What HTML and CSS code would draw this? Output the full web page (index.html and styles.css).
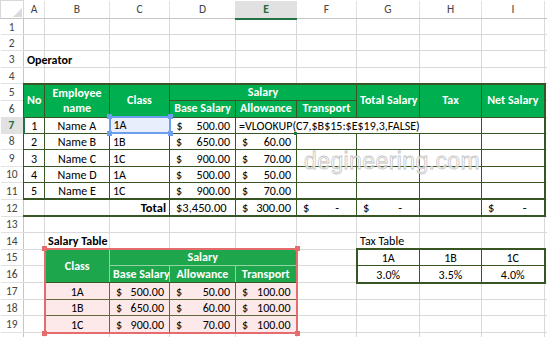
FILE: index.html
```html
<!DOCTYPE html>
<html>
<head>
<meta charset="utf-8">
<link rel="stylesheet" href="styles.css">
</head>
<body>
<table class="sheet">
<colgroup>
<col class="w-rh"><col class="w-a"><col class="w-b"><col class="w-c"><col class="w-d"><col class="w-e"><col class="w-f"><col class="w-g"><col class="w-h"><col class="w-i"><col class="w-x">
</colgroup>
<tr class="hdr">
<td class="corner"><svg width="9" height="9" viewBox="0 0 9 9"><polygon points="9,0 9,9 0,9" fill="#dadada"/></svg></td>
<td class="ch">A</td><td class="ch">B</td><td class="ch">C</td><td class="ch">D</td><td class="ch sel">E</td><td class="ch">F</td><td class="ch">G</td><td class="ch">H</td><td class="ch">I</td><td class="ch"></td>
</tr>
<tr class="r16"><td class="rh">1</td><td></td><td></td><td></td><td></td><td></td><td></td><td></td><td></td><td></td><td></td></tr>
<tr class="r16"><td class="rh">2</td><td></td><td></td><td></td><td></td><td></td><td></td><td></td><td></td><td></td><td></td></tr>
<tr class="r17"><td class="rh">3</td><td class="b">Operator</td><td></td><td></td><td></td><td></td><td></td><td></td><td></td><td></td><td></td></tr>
<tr class="r16"><td class="rh">4</td><td></td><td></td><td></td><td></td><td></td><td></td><td></td><td></td><td></td><td></td></tr>
<tr class="r16">
<td class="rh">5</td>
<td class="th top" rowspan="2">No</td>
<td class="th top" rowspan="2">Employee<br>name</td>
<td class="th top" rowspan="2">Class</td>
<td class="th top" colspan="3">Salary</td>
<td class="th top" rowspan="2">Total Salary</td>
<td class="th top" rowspan="2">Tax</td>
<td class="th top right" rowspan="2">Net Salary</td>
<td></td>
</tr>
<tr class="r17">
<td class="rh">6</td>
<td class="th">Base Salary</td><td class="th">Allowance</td><td class="th">Transport</td>
<td></td>
</tr>
<tr class="r16">
<td class="rh cur">7</td>
<td class="t c">1</td><td class="t c">Name A</td>
<td class="t ref">1A<span class="hd h-tl"></span><span class="hd h-tr"></span><span class="hd h-bl"></span><span class="hd h-br"></span></td>
<td class="t acct"><span class="cur-s">$</span>500.00</td>
<td class="t act ov">=VLOOKUP(C7,$B$15:$E$19,3,FALSE)<span class="fill"></span></td>
<td class="t ov"></td><td class="t ov"></td><td class="t"></td><td class="t right"></td>
<td></td>
</tr>
<tr class="r16">
<td class="rh">8</td>
<td class="t c">2</td><td class="t c">Name B</td><td class="t">1B</td>
<td class="t acct"><span class="cur-s">$</span>650.00</td>
<td class="t acct"><span class="cur-s">$</span>60.00</td>
<td class="t"></td><td class="t"></td><td class="t"></td><td class="t right"></td>
<td></td>
</tr>
<tr class="r17">
<td class="rh">9</td>
<td class="t c">3</td><td class="t c">Name C</td><td class="t">1C</td>
<td class="t acct"><span class="cur-s">$</span>900.00</td>
<td class="t acct"><span class="cur-s">$</span>70.00</td>
<td class="t"></td><td class="t"></td><td class="t"></td><td class="t right"></td>
<td></td>
</tr>
<tr class="r16">
<td class="rh">10</td>
<td class="t c">4</td><td class="t c">Name D</td><td class="t">1A</td>
<td class="t acct"><span class="cur-s">$</span>500.00</td>
<td class="t acct"><span class="cur-s">$</span>50.00</td>
<td class="t"></td><td class="t"></td><td class="t"></td><td class="t right"></td>
<td></td>
</tr>
<tr class="r17">
<td class="rh">11</td>
<td class="t c">5</td><td class="t c">Name E</td><td class="t">1C</td>
<td class="t acct"><span class="cur-s">$</span>900.00</td>
<td class="t acct"><span class="cur-s">$</span>70.00</td>
<td class="t"></td><td class="t"></td><td class="t"></td><td class="t right"></td>
<td></td>
</tr>
<tr class="r17">
<td class="rh">12</td>
<td class="tot g-r"></td><td class="tot g-r"></td>
<td class="tot g-l b r">Total</td>
<td class="tot acct big">$3,450.00</td>
<td class="tot acct"><span class="cur-s">$</span>300.00</td>
<td class="tot acct dash"><span class="cur-s">$</span>-</td>
<td class="tot acct dash"><span class="cur-s">$</span>-</td>
<td class="tot"></td>
<td class="tot acct dash right"><span class="cur-s">$</span>-</td>
<td></td>
</tr>
<tr class="r16"><td class="rh">13</td><td></td><td></td><td></td><td></td><td></td><td></td><td></td><td></td><td></td><td></td></tr>
<tr class="r17"><td class="rh">14</td><td></td><td class="b">Salary Table</td><td></td><td></td><td></td><td></td><td>Tax Table</td><td></td><td></td><td></td></tr>
<tr class="r16">
<td class="rh">15</td><td></td>
<td class="sh rl rt" rowspan="2">Class<span class="rd h-tl"></span></td>
<td class="sh rt rr" colspan="3">Salary<span class="rd h-tr"></span></td>
<td></td>
<td class="x c xl xt">1A</td><td class="x c xt">1B</td><td class="x c xt xr">1C</td>
<td></td>
</tr>
<tr class="r17">
<td class="rh">16</td><td></td>
<td class="sh sb">Base Salary</td><td class="sh sb">Allowance</td><td class="sh sb rr">Transport</td>
<td></td>
<td class="x c xl xb">3.0%</td><td class="x c xb">3.5%</td><td class="x c xb xr">4.0%</td>
<td></td>
</tr>
<tr class="r17">
<td class="rh">17</td><td></td>
<td class="s c rl">1A</td>
<td class="s acct"><span class="cur-s">$</span>500.00</td>
<td class="s acct"><span class="cur-s">$</span>50.00</td>
<td class="s acct rr"><span class="cur-s">$</span>100.00</td>
<td></td><td></td><td></td><td></td><td></td>
</tr>
<tr class="r16">
<td class="rh">18</td><td></td>
<td class="s c rl">1B</td>
<td class="s acct"><span class="cur-s">$</span>650.00</td>
<td class="s acct"><span class="cur-s">$</span>60.00</td>
<td class="s acct rr"><span class="cur-s">$</span>100.00</td>
<td></td><td></td><td></td><td></td><td></td>
</tr>
<tr class="r17">
<td class="rh">19</td><td></td>
<td class="s c rl rb">1C<span class="rd h-bl"></span></td>
<td class="s acct rb"><span class="cur-s">$</span>900.00</td>
<td class="s acct rb"><span class="cur-s">$</span>70.00</td>
<td class="s acct rr rb"><span class="cur-s">$</span>100.00<span class="rd h-br"></span></td>
<td></td><td></td><td></td><td></td><td></td>
</tr>
<tr class="r16"><td class="rh"></td><td></td><td></td><td></td><td></td><td></td><td></td><td></td><td></td><td></td><td></td></tr>
</table>
<div class="watermark">degineering.com</div>
</body>
</html>
```
FILE: styles.css
```css
html, body {
  margin: 0;
  padding: 0;
  background: #ffffff;
  overflow: hidden;
}
body {
  position: relative;
  width: 547px;
  height: 337px;
  font-family: Carlito, Calibri, Lato, "Liberation Sans", sans-serif;
  font-size: 12px;
  color: #000;
}
.sheet {
  border-collapse: collapse;
  table-layout: fixed;
  width: 547px;
}
.w-rh { width: 23px; }
.w-a { width: 21px; }
.w-b { width: 65px; }
.w-c { width: 60px; }
.w-d { width: 66px; }
.w-e { width: 61px; }
.w-f { width: 60px; }
.w-g { width: 63px; }
.w-h { width: 62px; }
.w-i { width: 63px; }
.w-x { width: 3px; }

td {
  border: 1px solid #d9d9d9;
  padding: 0 3px;
  white-space: nowrap;
  overflow: visible;
  vertical-align: bottom;
  line-height: 14px;
  position: relative;
}
tr.hdr { height: 18px; }
tr.r16 { height: 16px; }
tr.r17 { height: 17px; }

.corner {
  padding: 0;
  text-align: right;
  vertical-align: bottom;
  border-bottom-color: #c6c6c6;
}
.corner svg { display: block; margin: 0 1px 1px auto; }
.ch {
  text-align: center;
  vertical-align: middle;
  color: #444;
  font-size: 11.5px;
  border-top: none;
  border-bottom: 1px solid #c6c6c6;
  border-left-color: #e1e1e1;
  border-right-color: #e1e1e1;
}
.ch.sel {
  background: #e1e1e1;
  color: #1e6a3d;
  font-weight: bold;
  border-bottom: 2px solid #217346;
}
.rh {
  text-align: center;
  color: #444;
  font-size: 11.5px;
  padding: 0;
  vertical-align: middle;
  border-left: none;
  border-top-color: #e1e1e1;
  border-bottom-color: #e1e1e1;
  border-right-color: #c6c6c6;
}
.rh.cur {
  background: #e1e1e1;
  color: #1e6a3d;
  font-weight: bold;
  border-right: 2px solid #217346;
}

.b { font-weight: bold; }
.c { text-align: center; }
.r { text-align: right; }

/* top table */
.th {
  background: #00b050;
  color: #fff;
  font-weight: bold;
  text-align: center;
  vertical-align: middle;
  border: 1px double #375623;
  line-height: 15px;
}
.th.top { border-top: 2px solid #375623; }
.t { border: 1px double #375623; }
.right { border-right: 2px solid #375623; }
.ov { border-right-style: hidden; }
.tot {
  border: 1px double #375623;
  border-top: 2px solid #375623;
  border-bottom: 2px solid #375623;
  font-size: 12.5px;
}
.tot.g-r { border-right: 1px solid #d9d9d9; border-left: 1px solid #d9d9d9; }
.tot.g-l { border-left: 1px solid #d9d9d9; }
.tot.right { border-right: 2px solid #375623; }

.acct {
  text-align: right;
  padding: 0 5px 0 6px;
}
.acct.big { text-align: left; }
.acct.dash { padding-right: 17px; }
.cur-s { float: left; }

.ref {
  background: #e8eefb;
  border: 2px solid #6d9eeb;
}
.hd, .rd {
  position: absolute;
  width: 5px;
  height: 5px;
}
.hd { background: #6d9eeb; }
.rd { background: #e46c6c; }
.h-tl { left: -4px; top: -4px; }
.h-tr { right: -4px; top: -4px; }
.h-bl { left: -4px; bottom: -4px; }
.h-br { right: -4px; bottom: -4px; }
.fill {
  position: absolute;
  left: 58px;
  bottom: -2px;
  width: 3px;
  height: 3px;
  background: #217346;
}

/* salary table */
.sh {
  background: #1ea64c;
  color: #fff;
  font-weight: bold;
  text-align: center;
  vertical-align: middle;
  border: 1px double #8fd4a2;
  line-height: 15px;
}
.sh.sb { border-bottom: 1px double #375623; }
.sh[rowspan] { border-bottom: 1px double #375623; }
.s {
  background: #fde9e9;
  border: 1px double #5f6b3c;
}
.rl { border-left: 2px solid #e46c6c; }
.rr { border-right: 2px solid #e46c6c; }
.rt { border-top: 2px solid #e46c6c; }
.rb { border-bottom: 2px solid #e46c6c; }

/* tax table */
.x { border: 1px double #375623; }
.xl { border-left: 2px solid #375623; }
.xr { border-right: 2px solid #375623; }
.xt { border-top: 2px solid #375623; }
.xb { border-bottom: 2px solid #375623; }

.watermark {
  position: absolute;
  left: 304px;
  top: 149px;
  font-family: "Liberation Sans", Arial, sans-serif;
  font-size: 23px;
  line-height: 25px;
  color: rgba(255, 255, 255, 0.75);
  -webkit-text-stroke: 0.8px rgba(185, 185, 185, 0.85);
  letter-spacing: 0.4px;
  pointer-events: none;
}
```
